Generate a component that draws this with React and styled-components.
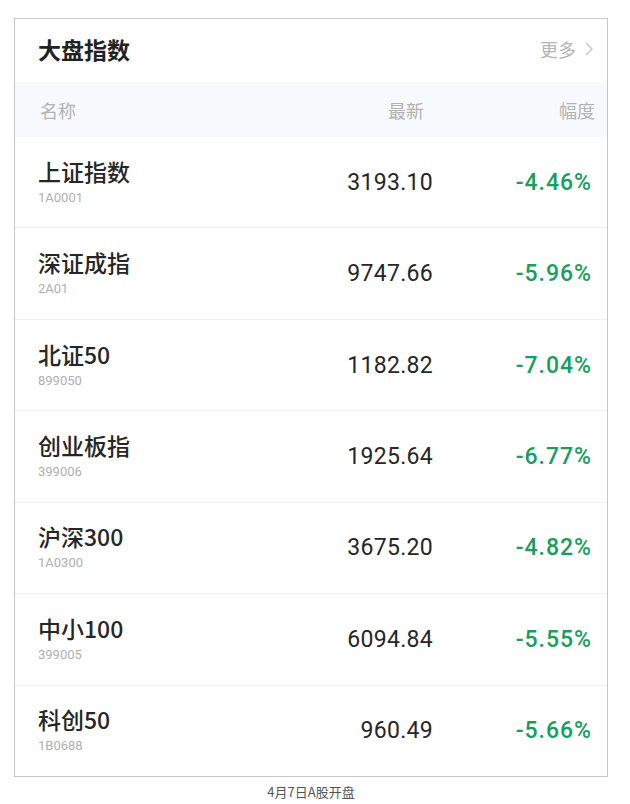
import React from 'react';
import styled, { createGlobalStyle } from 'styled-components';

const GlobalStyle = createGlobalStyle`
  body {
    margin: 0;
    background: #ffffff;
    font-family: Roboto, "Noto Sans CJK SC", sans-serif;
  }
`;

const Page = styled.div`
  width: 630px;
  padding: 18px 0 0 14px;
  box-sizing: border-box;
`;

const Card = styled.div`
  width: 594px;
  height: 759px;
  box-sizing: border-box;
  border: 1px solid #c6c6c6;
  background: #fff;
  display: flex;
  flex-direction: column;
`;

const TitleBar = styled.div`
  height: 63px;
  display: flex;
  align-items: center;
  justify-content: space-between;
  padding: 0 14px 4px 23px;
  box-sizing: border-box;
`;

const Title = styled.h2`
  margin: 0;
  font-family: "Noto Sans CJK SC", sans-serif;
  font-size: 23px;
  font-weight: 700;
  color: #222;
`;

const More = styled.span`
  display: flex;
  align-items: center;
  gap: 9px;
  font-family: "Noto Sans CJK SC", sans-serif;
  font-size: 18px;
  color: #b4b4b4;
`;

const HeaderRow = styled.div`
  height: 55px;
  display: grid;
  grid-template-columns: 1fr 143px 171px;
  align-items: center;
  padding: 0 12px 0 25px;
  background: #f7f9fc;
  font-family: "Noto Sans CJK SC", sans-serif;
  font-size: 18px;
  color: #b3b3b3;
`;

const Cell = styled.span`
  text-align: ${(props) => (props.right ? 'right' : 'left')};
`;

const Rows = styled.div`
  flex: 1;
  display: flex;
  flex-direction: column;
`;

const Row = styled.div`
  flex: 1;
  display: grid;
  grid-template-columns: 1fr 150px 159px;
  align-items: center;
  padding: 0 15px 0 23px;
  & + & {
    border-top: 1px solid #f0f0f0;
  }
`;

const NameBlock = styled.div`
  display: flex;
  flex-direction: column;
  margin-top: -2px;
`;

const Name = styled.span`
  font-family: "Noto Sans CJK SC", sans-serif;
  font-size: 23px;
  font-weight: 500;
  color: #262626;
  line-height: 30px;
`;

const Code = styled.span`
  font-family: Roboto, sans-serif;
  font-size: 13px;
  color: #b0b0b0;
  line-height: 18px;
  margin-top: 3px;
`;

const Value = styled.span`
  font-family: Roboto, sans-serif;
  font-size: 23px;
  color: #262626;
  text-align: right;
  letter-spacing: 0.3px;
`;

const Change = styled(Value)`
  color: #1a9e5e;
  font-weight: 500;
  letter-spacing: 1px;
`;

const Caption = styled.div`
  width: 594px;
  text-align: center;
  margin-top: 5px;
  font-family: "Noto Sans CJK SC", sans-serif;
  font-size: 13px;
  color: #555;
`;

const data = [
  { name: '上证指数', code: '1A0001', value: '3193.10', change: '-4.46%' },
  { name: '深证成指', code: '2A01', value: '9747.66', change: '-5.96%' },
  { name: '北证50', code: '899050', value: '1182.82', change: '-7.04%' },
  { name: '创业板指', code: '399006', value: '1925.64', change: '-6.77%' },
  { name: '沪深300', code: '1A0300', value: '3675.20', change: '-4.82%' },
  { name: '中小100', code: '399005', value: '6094.84', change: '-5.55%' },
  { name: '科创50', code: '1B0688', value: '960.49', change: '-5.66%' },
];

const Chevron = () => (
  <svg width="8" height="14" viewBox="0 0 8 14">
    <polyline points="1,1 7,7 1,13" fill="none" stroke="#c4c4c4" strokeWidth="1.3" />
  </svg>
);

const App = () => {
  return (
    <Page>
      <GlobalStyle />
      <Card>
        <TitleBar>
          <Title>大盘指数</Title>
          <More>
            更多
            <Chevron />
          </More>
        </TitleBar>
        <HeaderRow>
          <Cell>名称</Cell>
          <Cell right>最新</Cell>
          <Cell right>幅度</Cell>
        </HeaderRow>
        <Rows>
          {data.map((row, i) => (
            <Row key={i}>
              <NameBlock>
                <Name>{row.name}</Name>
                <Code>{row.code}</Code>
              </NameBlock>
              <Value>{row.value}</Value>
              <Change>{row.change}</Change>
            </Row>
          ))}
        </Rows>
      </Card>
      <Caption>4月7日A股开盘</Caption>
    </Page>
  );
};

export default App;
